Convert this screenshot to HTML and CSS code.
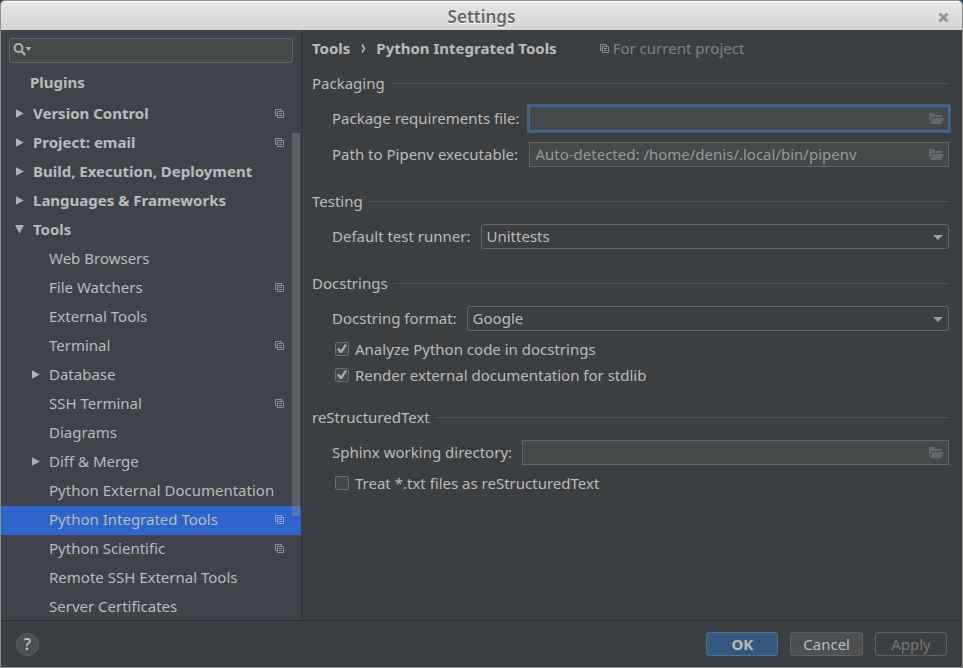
FILE: index.html
```html
<!DOCTYPE html>
<html lang="en">
<head>
<meta charset="utf-8">
<title>Settings</title>
<link rel="stylesheet" href="styles.css">
</head>
<body>
<svg class="sprites" aria-hidden="true">
  <symbol id="copy" viewBox="0 0 9 9"><path d="M2 6.5H.5V.5h6V2M2.500 2.500h6v6h-6zM4 4.500h3M4 6.500h3" fill="none" stroke="currentColor"/></symbol>
  <symbol id="right" viewBox="0 0 9 9"><path d="M1 .2v8.600L8.800 4.500z" fill="currentColor"/></symbol>
  <symbol id="down" viewBox="0 0 9 9"><path d="M0 0h9L4.500 8.500z" fill="currentColor"/></symbol>
  <symbol id="folder" viewBox="0 0 15 11"><path d="M0 0h5l1.300 2H13v2H3L0 10zM3.800 5H15l-3 6H.8z" fill="currentColor"/></symbol>
  <symbol id="caret" viewBox="0 0 10 5"><path d="M0 0h10L5 5z" fill="currentColor"/></symbol>
</svg>
<div class="window">
  <header class="titlebar">
    <h1 class="title">Settings</h1>
    <button class="close" type="button" aria-label="Close"><svg width="11" height="11" viewBox="0 0 11 11"><path d="M1.500 1.500l8 8M9.500 1.500l-8 8" stroke="currentColor" stroke-width="3"/></svg></button>
  </header>
  <div class="body">
    <aside class="sidebar">
      <label class="search">
        <svg width="20" height="13" viewBox="0 0 20 13"><circle cx="5.500" cy="5" r="4" fill="none" stroke="currentColor" stroke-width="2"/><path d="M8 7.500l4 4.500" stroke="currentColor" stroke-width="2.200"/><path d="M12.500 4h6l-3 4z" fill="currentColor"/></svg>
        <input type="text" aria-label="Search settings">
      </label>
      <nav class="tree">
        <a class="item plugins" href="#">Plugins</a>
        <a class="item top" href="#"><svg class="arrow"><use href="#right"/></svg>Version Control<svg class="copy"><use href="#copy"/></svg></a>
        <a class="item top" href="#"><svg class="arrow"><use href="#right"/></svg>Project: email<svg class="copy"><use href="#copy"/></svg></a>
        <a class="item top" href="#"><svg class="arrow"><use href="#right"/></svg>Build, Execution, Deployment</a>
        <a class="item top" href="#"><svg class="arrow"><use href="#right"/></svg>Languages &amp; Frameworks</a>
        <a class="item top" href="#"><svg class="arrow"><use href="#down"/></svg>Tools</a>
        <a class="item leaf" href="#">Web Browsers</a>
        <a class="item leaf" href="#">File Watchers<svg class="copy"><use href="#copy"/></svg></a>
        <a class="item leaf" href="#">External Tools</a>
        <a class="item leaf" href="#">Terminal<svg class="copy"><use href="#copy"/></svg></a>
        <a class="item branch" href="#"><svg class="arrow"><use href="#right"/></svg>Database</a>
        <a class="item leaf" href="#">SSH Terminal<svg class="copy"><use href="#copy"/></svg></a>
        <a class="item leaf" href="#">Diagrams</a>
        <a class="item branch" href="#"><svg class="arrow"><use href="#right"/></svg>Diff &amp; Merge</a>
        <a class="item leaf" href="#">Python External Documentation</a>
        <a class="item leaf selected" href="#" aria-current="page">Python Integrated Tools<svg class="copy"><use href="#copy"/></svg></a>
        <a class="item leaf" href="#">Python Scientific<svg class="copy"><use href="#copy"/></svg></a>
        <a class="item leaf" href="#">Remote SSH External Tools</a>
        <a class="item leaf" href="#">Server Certificates</a>
        <span class="thumb"></span>
      </nav>
    </aside>
    <main class="content">
      <div class="crumbs">
        <span>Tools</span>
        <svg class="chevron" width="5" height="9" viewBox="0 0 5 9"><path d="M1 .5l2.500 4L1 8.500" fill="none" stroke="currentColor" stroke-width="1.500"/></svg>
        <span>Python Integrated Tools</span>
        <span class="scope"><svg class="copy"><use href="#copy"/></svg>For current project</span>
      </div>

      <section class="section">
        <h2 class="heading">Packaging</h2>
        <div class="fields">
          <label for="req">Package requirements file:</label>
          <div class="path focused"><input id="req" type="text"><button type="button" aria-label="Browse"><svg class="folder"><use href="#folder"/></svg></button></div>
          <label for="pipenv">Path to Pipenv executable:</label>
          <div class="path"><input id="pipenv" type="text" placeholder="Auto-detected: /home/denis/.local/bin/pipenv"><button type="button" aria-label="Browse"><svg class="folder"><use href="#folder"/></svg></button></div>
        </div>
      </section>

      <section class="section">
        <h2 class="heading">Testing</h2>
        <div class="fields">
          <label for="runner">Default test runner:</label>
          <div class="combo"><select id="runner"><option>Unittests</option></select><svg class="caret"><use href="#caret"/></svg></div>
        </div>
      </section>

      <section class="section">
        <h2 class="heading">Docstrings</h2>
        <div class="fields">
          <label for="format">Docstring format:</label>
          <div class="combo"><select id="format"><option>Google</option></select><svg class="caret"><use href="#caret"/></svg></div>
        </div>
        <div class="checks">
          <label class="check"><input type="checkbox" checked>Analyze Python code in docstrings</label>
          <label class="check"><input type="checkbox" checked>Render external documentation for stdlib</label>
        </div>
      </section>

      <section class="section after-checks">
        <h2 class="heading">reStructuredText</h2>
        <div class="fields">
          <label for="sphinx">Sphinx working directory:</label>
          <div class="path"><input id="sphinx" type="text"><button type="button" aria-label="Browse"><svg class="folder"><use href="#folder"/></svg></button></div>
        </div>
        <div class="checks">
          <label class="check"><input type="checkbox">Treat *.txt files as reStructuredText</label>
        </div>
      </section>
    </main>
  </div>
  <footer class="footer">
    <button class="help" type="button" aria-label="Help">?</button>
    <button class="btn primary" type="button">OK</button>
    <button class="btn" type="button">Cancel</button>
    <button class="btn" type="button" disabled>Apply</button>
  </footer>
</div>
</body>
</html>
```
FILE: styles.css
```css
* { box-sizing: border-box; }

body {
  margin: 0;
  background: #2b4a55;
  color: #bbbbbb;
  font: 15px/20px "Noto Sans", sans-serif;
}

input, select, button {
  margin: 0;
  padding: 0;
  border: 0;
  background: none;
  color: inherit;
  font: inherit;
  outline: none;
}

svg { display: block; flex: none; }
.sprites { position: absolute; width: 0; height: 0; }

.window {
  display: flex;
  flex-direction: column;
  height: 100vh;
  border: 1px solid #8f8f8f;
  border-radius: 5px 5px 0 0;
  background: #3c3f41;
  overflow: hidden;
}

.titlebar {
  position: relative;
  display: flex;
  flex: none;
  align-items: center;
  justify-content: center;
  height: 29px;
  padding-top: 2px;
  border-top: 1px solid #ffffff;
  background: linear-gradient(#e6e6e6, #d5d5d5);
}
.title {
  margin: 0;
  color: #666666;
  font-size: 17px;
  font-weight: 600;
  text-shadow: 0 1px 0 #ffffff;
}
.close { position: absolute; right: 13px; color: #969696; }

.body { display: flex; flex: 1; min-height: 0; }

.sidebar {
  display: flex;
  flex: none;
  flex-direction: column;
  width: 301px;
  border-right: 1px solid #323435;
  background: #3f434c;
}
.search {
  display: flex;
  flex: none;
  margin: 8px 8px 6px;
  padding: 4px 3px;
  height: 25px;
  border: 1px solid #646464;
  border-radius: 3px;
  background: #45494a;
  color: #afb1b3;
}
.search input { flex: 1; min-width: 0; }

.tree { position: relative; flex: 1; min-height: 0; overflow: hidden; }
.item {
  display: flex;
  align-items: center;
  height: 29px;
  padding-right: 17px;
  padding-bottom: 4px;
  color: inherit;
  text-decoration: none;
  white-space: nowrap;
}
.item svg { margin-top: 2px; }
.plugins { margin-bottom: 2px; padding-left: 29px; font-weight: bold; }
.top { padding-left: 14px; font-weight: bold; }
.branch { padding-left: 30px; }
.leaf { padding-left: 48px; }
.selected { background: #2f65ca; }
.arrow { width: 9px; height: 9px; margin-right: 9px; color: #afb1b3; }
.copy { width: 9px; height: 9px; color: #87939a; }
.item .copy { margin-left: auto; }
.selected .copy { color: #8fa8d8; }
.thumb {
  position: absolute;
  top: 11.6%;
  right: 1px;
  width: 8px;
  height: 69.6%;
  background: rgba(166, 166, 166, 0.28);
}

.content { flex: 1; min-width: 0; padding: 8px 13px 8px 10px; }
.crumbs { display: flex; align-items: center; font-weight: bold; }
.chevron { margin: 0 10px 0 11px; }
.scope {
  display: flex;
  align-items: center;
  gap: 4px;
  margin-left: 43px;
  color: #808080;
  font-weight: normal;
}

.section { margin-top: 24px; }
.crumbs + .section { margin-top: 15px; }
.after-checks { margin-top: 19px; }
.heading {
  display: flex;
  align-items: center;
  gap: 5px;
  margin: 0 0 13px;
  font-size: 15px;
  font-weight: normal;
}
.heading::after { content: ""; flex: 1; height: 1px; background: #515151; }

.fields {
  display: grid;
  grid-template-columns: auto 1fr;
  gap: 11px 10px;
  align-items: center;
  padding-left: 20px;
}
.fields label { padding-bottom: 2px; }
.path {
  display: flex;
  align-items: center;
  height: 25px;
  padding: 0 4px 0 5px;
  border: 1px solid #646464;
  background: #45494a;
}
.path input { flex: 1; min-width: 0; padding-bottom: 2px; }
.path input::placeholder { color: #999999; opacity: 1; }
.focused { border-color: #466d94; box-shadow: 0 0 0 2px #3d6185; }
.folder { width: 15px; height: 11px; color: #62686c; }

.combo { position: relative; }
.combo select {
  display: block;
  appearance: none;
  width: 100%;
  height: 25px;
  padding: 0 24px 2px 5px;
  border: 1px solid #646464;
  border-radius: 3px;
}
.caret {
  position: absolute;
  top: 11px;
  right: 6px;
  width: 10px;
  height: 5px;
  color: #9a9da0;
  pointer-events: none;
}

.checks { margin-top: 5px; padding-left: 23px; }
.check { display: flex; align-items: center; gap: 6px; height: 26px; }
.check input {
  appearance: none;
  width: 14px;
  height: 14px;
  border: 1px solid #6b6b6b;
  border-radius: 2px;
  background: #43494a;
}
.check input:checked::before {
  content: "";
  display: block;
  width: 12px;
  height: 12px;
  background: #a9a9a9;
  clip-path: polygon(1px 6px, 3px 5px, 5px 7px, 9px 1px, 11px 2px, 6px 10px, 4px 10px);
}

.footer {
  display: flex;
  flex: none;
  align-items: center;
  gap: 12px;
  height: 47px;
  padding: 0 15px;
  border-top: 1px solid #323232;
}
.help {
  width: 23px;
  height: 23px;
  margin-right: auto;
  border: 1px solid #5e6060;
  border-radius: 50%;
  background: #4c5052;
  font-size: 16px;
  font-weight: 600;
}
.btn {
  min-width: 72px;
  height: 24px;
  padding: 0 12px;
  border: 1px solid #5e6060;
  border-radius: 3px;
  background: #4c5052;
}
.primary { border-color: #4c708c; background: #365880; font-weight: bold; }
.btn:disabled { background: none; color: #777777; }
```
